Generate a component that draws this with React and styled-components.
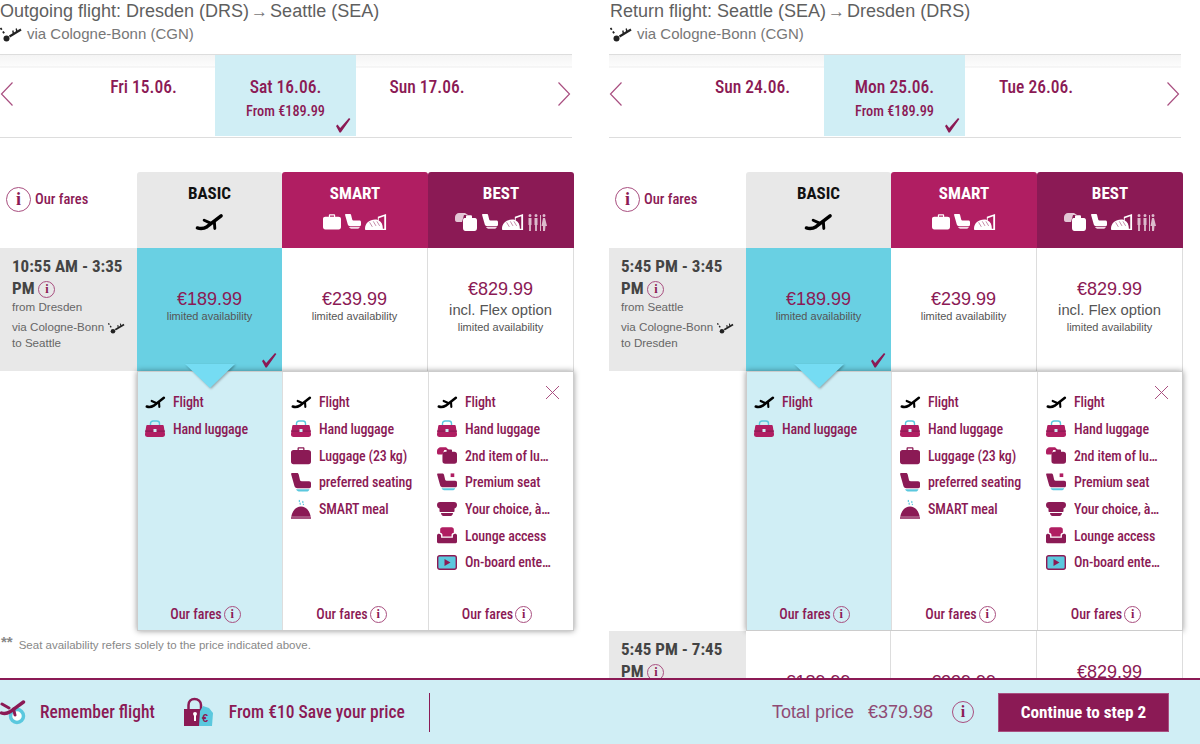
import React from 'react';
import styled, { createGlobalStyle, css } from 'styled-components';

const PLUM = '#8b1a55';
const narrow = css`
  font-family: Roboto, "Liberation Sans", sans-serif;
  font-stretch: 75%;
`;

const GlobalStyle = createGlobalStyle`
  html, body { margin: 0; padding: 0; background: #fff; }
  body { font-family: "Liberation Sans", Arial, sans-serif; color: #555; }
  * { box-sizing: border-box; }
`;

const Plane = ({ size = 21, color = '#000' }) => (
  <svg width={size} height={size * 0.7} viewBox="0 0 30 21">
    <g fill="none" stroke={color} strokeLinecap="round">
      <path strokeWidth="3.600" d="M2.500 16.500c3.500 1.200 7 .6 10-1.300L27 4" />
      <path strokeWidth="3" d="M9.500 8.500l6.500 3M20 10l.5 7" />
    </g>
  </svg>
);

const Stopover = () => (
  <svg width="22" height="17" viewBox="0 0 22 17">
    <circle cx="6.500" cy="13.500" r="3" fill="#222" />
    <g fill="none" stroke="#222">
      <path strokeWidth="1.800" strokeDasharray="2.200 2" d="M.5 3l4.500 6.500" />
      <path strokeWidth="2.200" d="M9.500 11.500L21 4.500" />
      <path strokeWidth="1.400" d="M13.500 9l-.7-3.500M17 7l-.8-3.500" />
    </g>
  </svg>
);

const Suitcase = ({ color = PLUM, width = 20 }) => (
  <svg width={width} height={width * 0.9} viewBox="0 0 20 18">
    <path fill={color} d="M6.500 3V1.500C6.500.7 7 .3 7.800.3h4.400c.8 0 1.300.4 1.300 1.200V3h3.500C19 3 20 4 20 5.500v9c0 1.700-1 2.700-2.500 2.700h-15C1 17.200 0 16.200 0 14.500v-9C0 4 1 3 2.500 3zm1.300 0h4.400V1.600H7.800z" />
  </svg>
);

const DoubleCase = () => (
  <svg width="23" height="18" viewBox="0 0 23 18">
    <path fill="#e3c6d5" d="M4 0h6l3 2H9L7 9H2C.5 9 0 8 0 6.500V4c0-2 2-4 4-4z" />
    <path fill="#fff" d="M9.500 5H11V3.500c0-.8.500-1.200 1.200-1.200h3.600c.7 0 1.200.4 1.200 1.200V5h3c1.300 0 2 1 2 2.500V15c0 2-1 3-2.500 3h-9C9 18 8 17 8 15V7.500C8 6 8.500 5 9.500 5z" />
  </svg>
);

const HandBag = () => (
  <svg width="20" height="18" viewBox="0 0 20 18">
    <path fill="none" stroke="#5bc8de" strokeWidth="1.400" d="M5.500 6V3.500C5.500 1.800 7 1 8 1h4c1 0 2.500.8 2.500 2.500V6" />
    <path fill="#b01e62" d="M2.500 5h15c.8 0 1.200.5 1.300 1.200L20 14c.2 2-1 3-2.500 3h-15C1 17 -.2 16 0 14l1.200-7.800C1.300 5.500 1.700 5 2.500 5z" />
    <rect x="0" y="10.500" width="20" height="1.200" fill="#8b1a55" />
    <rect x="8.500" y="9" width="3" height="3" fill="#d0eef5" />
  </svg>
);

const Seat = ({ color = PLUM, base = '#5bc8de', width = 20 }) => (
  <svg width={width} height={width * 0.95} viewBox="0 0 20 19">
    <path fill={color} d="M1 0h5c1 0 1.500.6 1.700 1.500L9 7c.2.800.8 1.200 1.600 1.200H18c1.300 0 2 .8 2 2v3.300c0 1-.7 1.700-1.700 1.700H6.500c-1.500 0-2.500-.7-3-2L.2 1.500C0 .6.300 0 1 0z" />
    <path fill={base} d="M5 16.200h13.500c-.5 1.500-1.500 2.300-3 2.300H9c-2 0-3.300-.8-4-2.300z" />
  </svg>
);

const MealBread = ({ width = 22 }) => (
  <svg width={width} height={width * 0.75} viewBox="0 0 24 18">
    <path fill="#fff" d="M14 3l9-3v18H2C.5 18 0 17 0 16c0-6 5-10 11-10 1 0 2 .2 3 .5zM15 7c3 1.500 4.500 4.500 4.500 9H21V2.500l-6 2z" />
    <path fill="none" stroke="rgba(139,26,85,.55)" strokeWidth="1" d="M5 9l3 5M9 8l3 5M13 8l3 5" />
  </svg>
);

const Cutlery = () => (
  <svg width="20" height="17" viewBox="0 0 20 17" opacity="0.7">
    <path fill="#fff" d="M2 0a1.500 1.500 0 110 3 1.500 1.500 0 010-3zM.5 4h3v7h-.6v6H1.100v-6H.5zM8 0a1.500 1.500 0 110 3 1.500 1.500 0 010-3zM6.500 4h3v7h-.6v6H7.100v-6h-.6zM12 1h1v16h-1zM16 0a1.500 1.500 0 110 3 1.500 1.500 0 010-3zM15 4h2l2 8h-1.500l-.5 5h-2v-5h-1.500z" />
  </svg>
);

const MealDome = () => (
  <svg width="20" height="20" viewBox="0 0 20 20">
    <path fill="none" stroke="#5bc8de" strokeWidth="1.200" strokeDasharray="2 1" d="M8.500 1c-1 2 1.500 3 .5 5M12 2c-1 1.500 1 2.500.3 4" />
    <path fill={PLUM} d="M10 7.500c5 0 8.500 4 9.800 10.300H.2C1.500 11.500 5 7.500 10 7.500zM0 18.300h20v1.500H0z" />
  </svg>
);

const SecondBag = () => (
  <svg width="20" height="17" viewBox="0 0 22 18">
    <path fill="#b01e62" d="M4 0h6l3 3H8L6 8H2C.5 8 0 7 0 6V4c0-2 2-4 4-4z" />
    <path fill={PLUM} d="M9 5h1.500V3.500c0-.8.500-1.200 1.200-1.200h3.600c.7 0 1.200.4 1.200 1.200V5H19c2 0 3 1.200 3 3v7c0 2-1 3-3 3H9c-2 0-3-1-3-3V8c0-1.800 1-3 3-3z" />
  </svg>
);

const PremiumSeat = () => (
  <svg width="20" height="19" viewBox="0 0 22 20">
    <rect x="15" y="0" width="4" height="4" fill="#b01e62" />
    <path fill={PLUM} d="M1 0h5c1 0 1.500.6 1.700 1.500L9 7c.2.800.8 1.200 1.600 1.200H20c1.300 0 2 .8 2 2v3.300c0 1-.7 1.700-1.700 1.700H6.500c-1.500 0-2.500-.7-3-2L.2 1.500C0 .6.300 0 1 0z" />
    <path fill="#5bc8de" d="M5 16.200h15c-.5 1.500-1.500 2.300-3 2.300H9c-2 0-3.300-.8-4-2.300z" />
  </svg>
);

const ChefHat = () => (
  <svg width="20" height="14" viewBox="0 0 20 14">
    <path fill={PLUM} d="M3 0h14c2 0 3 1.300 3 3s-1 3-2.500 3.500V9c0 .6-.4 1-1 1h-13c-.6 0-1-.4-1-1V6.500C1 6 0 4.700 0 3s1-3 3-3zM4 11h12c0 1.500-1 3-2.500 3h-7C5 14 4 12.500 4 11z" />
  </svg>
);

const Armchair = () => (
  <svg width="20" height="17" viewBox="0 0 22 18">
    <path fill="#b01e62" d="M6 0h10c1.500 0 2.500 1 2.500 2.500V6c-1.500 0-2.500 1-2.500 2.500V10H6V8.500C6 7 5 6 3.500 6V2.500C3.500 1 4.500 0 6 0z" />
    <path fill={PLUM} d="M0 9c0-1.300 1-2 2.200-2S4.500 8 4.500 9v2.500h13V9c0-1 1-2 2.300-2S22 7.700 22 9v7c0 1-.5 1.500-1.500 1.500h-19C.5 17.500 0 17 0 16z" />
  </svg>
);

const Screen = () => (
  <svg width="20" height="15" viewBox="0 0 20 15">
    <rect x="0.700" y="0.700" width="18.600" height="13.600" rx="2" fill="#5bc8de" stroke={PLUM} strokeWidth="1.400" />
    <path fill={PLUM} d="M7.500 4l6 3.500-6 3.500z" />
  </svg>
);

const Check = ({ size = 16 }) => (
  <svg width={size} height={size} viewBox="0 0 16 16">
    <path fill={PLUM} d="M1 9l1.600-1.400 2.600 3.400L14 1l1.400.9L5.800 15.500h-1.300z" />
  </svg>
);

const Chevron = ({ flip }) => (
  <svg width="14" height="26" viewBox="0 0 14 26">
    <path fill="none" stroke="#a94f80" strokeWidth="1.200" d={flip ? 'M1.500 1.500L12.500 13 1.500 24.500' : 'M12.500 1.500L1.500 13 12.500 24.500'} />
  </svg>
);

const Close = () => (
  <svg width="15" height="15" viewBox="0 0 15 15">
    <path fill="none" stroke="#a94f80" strokeWidth="1" d="M1 1l13 13M14 1L1 14" />
  </svg>
);

const Remember = () => (
  <svg width="26" height="26" viewBox="0 0 26 26">
    <circle cx="17" cy="17" r="6.500" fill="#fff" stroke="#5bc8de" strokeWidth="3.500" />
    <g fill="none" stroke={PLUM} strokeLinecap="round">
      <path strokeWidth="3.400" d="M1.500 14c3 1 6 .4 8.500-1.200L23.500 3" />
      <path strokeWidth="3" d="M2 5l7 4M13.500 10l1.500 6" />
    </g>
  </svg>
);

const PriceLock = () => (
  <svg width="30" height="30" viewBox="0 0 30 30">
    <path fill="none" stroke={PLUM} strokeWidth="2.500" d="M4.500 13V8c0-3.500 2.500-6 6-6s6.500 2.500 6.500 6v5" />
    <path fill={PLUM} d="M0 12h20v17H0z" />
    <path fill="#fff" d="M9 17a2 2 0 114 0l-1 2v5h-2v-5z" />
    <path fill="#5bc8de" d="M19 9l6 2 4 5-1 13H15l1-15z" />
    <text x="18" y="25" fontSize="11" fontWeight="700" fill={PLUM} fontFamily="Liberation Sans, sans-serif">€</text>
  </svg>
);

const InfoRing = styled.span`
  display: inline-flex;
  align-items: center;
  justify-content: center;
  width: ${(p) => p.$size || 17}px;
  height: ${(p) => p.$size || 17}px;
  border: ${(p) => (p.$size > 20 ? 1.5 : 1)}px solid #a94f80;
  border-radius: 50%;
  color: ${PLUM};
  font-family: "Liberation Serif", serif;
  font-stretch: normal;
  font-weight: 700;
  font-size: ${(p) => (p.$size || 17) * 0.72}px;
  line-height: 1;
  letter-spacing: 0;
  flex: none;
  vertical-align: middle;
`;

const Page = styled.div`
  position: relative;
  width: 1200px;
  height: 744px;
  overflow: hidden;
  display: grid;
  grid-template-columns: 574px 574px;
  column-gap: 35px;
  align-items: start;
`;

const Column = styled.section`
  min-width: 0;
`;

const Title = styled.h2`
  margin: 0;
  height: 22px;
  padding-left: ${(p) => (p.$inset ? 1 : 0)}px;
  font-size: 18px;
  line-height: 22px;
  font-weight: 400;
  color: #5f5f5f;
  white-space: nowrap;
`;

const TitleArrow = styled.span`
  margin: 0 2px;
  color: #777;
  font-size: 17px;
`;

const Via = styled.div`
  display: flex;
  align-items: center;
  gap: 5px;
  height: 22px;
  margin-bottom: 10px;
  padding-left: ${(p) => (p.$inset ? 1 : 0)}px;
  font-size: 15px;
  color: #777;
`;

const DateStrip = styled.div`
  display: grid;
  grid-template-columns: 72px 143px 141px 142px 1fr;
  height: 84px;
  margin-right: 2px;
  border-top: 1px solid #ddd;
  border-bottom: 1px solid #ddd;
  background: linear-gradient(#f4f4f4, #fcfcfc 11px, #eee 12px, #fff 13px);
`;

const ArrowCell = styled.div`
  display: flex;
  align-items: flex-start;
  justify-content: ${(p) => (p.$end ? 'flex-end' : 'flex-start')};
  margin-top: 13px;
  padding: 13px ${(p) => (p.$end ? '1px' : '0')} 0 0;
  background: #fff;
`;

const DateCell = styled.div`
  position: relative;
  margin-bottom: ${(p) => (p.$active ? '1px' : '0')};
  padding-top: ${(p) => (p.$active ? '22px' : '9px')};
  margin-top: ${(p) => (p.$active ? '0' : '13px')};
  text-align: center;
  background: ${(p) => (p.$active ? '#d0eef5' : '#fff')};
  color: ${PLUM};
  ${narrow}
`;

const DateLabel = styled.div`
  font-size: 17.500px;
  font-weight: 500;
  line-height: 20px;
`;

const DateFrom = styled.div`
  margin-top: 4px;
  font-size: 14.300px;
  font-weight: 500;
  line-height: 20px;
`;

const Corner = styled.span`
  position: absolute;
  right: 5px;
  bottom: 3px;
  line-height: 0;
`;

const FareGrid = styled.div`
  display: grid;
  grid-template-columns: 137px 145px 146px 146px;
  margin-top: 34px;
`;

const FareIntro = styled.div`
  display: flex;
  align-items: center;
  gap: 4px;
  height: 76px;
  padding: 0 0 22px 6px;
  color: ${PLUM};
  font-size: 14.500px;
  font-weight: 500;
  ${narrow}
`;

const FareHead = styled.div`
  display: flex;
  flex-direction: column;
  align-items: center;
  gap: 9px;
  height: 76px;
  padding-top: 11px;
  border-radius: 3px 3px 0 0;
  background: ${(p) => p.$bg};
  color: ${(p) => p.$fg};
  font-size: 17px;
  font-weight: 700;
  line-height: 20px;
  ${narrow}
`;

const HeadIcons = styled.div`
  display: flex;
  align-items: center;
  gap: 4px;
  height: 20px;
`;

const TimeCell = styled.div`
  height: 123px;
  padding: 7px 12px;
  background: #e8e8e8;
`;

const TimeText = styled.div`
  color: #444;
  font-size: 17px;
  font-weight: 700;
  line-height: 22px;
  ${narrow}
`;

const RouteLine = styled.div`
  display: flex;
  align-items: center;
  gap: 4px;
  height: 16px;
  margin-top: ${(p) => p.$gap || 0}px;
  color: #666;
  font-size: 11.600px;
  line-height: 16px;
  white-space: nowrap;
`;

const PriceCell = styled.div`
  position: relative;
  display: flex;
  flex-direction: column;
  align-items: center;
  justify-content: center;
  height: 123px;
  padding-bottom: 8px;
  background: ${(p) => (p.$active ? '#69d0e3' : '#fff')};
  border-right: ${(p) => (p.$active ? 'none' : '1px solid #ddd')};
`;

const Price = styled.div`
  color: ${PLUM};
  font-size: 18px;
  line-height: 21px;
`;

const FlexNote = styled.div`
  color: #555;
  font-size: 14.800px;
  line-height: 21px;
`;

const Limited = styled.div`
  color: #555;
  font-size: 11px;
  line-height: 12px;
`;

const Panel = styled.div`
  position: relative;
  grid-column: 2 / 5;
  display: grid;
  grid-template-columns: 145px 146px 1fr;
  height: 260px;
  background: #fff;
  border: 1px solid #ccc;
  box-shadow: 0 0 6px rgba(0, 0, 0, 0.4);
`;

const Pointer = styled.div`
  position: absolute;
  left: 47px;
  top: -8px;
  width: 0;
  height: 0;
  border-left: 25px solid transparent;
  border-right: 25px solid transparent;
  border-top: 24px solid #75dcf3;
  filter: drop-shadow(1px 1px 1px rgba(0, 0, 0, 0.3));
`;

const CloseButton = styled.span`
  position: absolute;
  right: 13px;
  top: 13px;
  line-height: 0;
`;

const PanelCol = styled.div`
  display: flex;
  flex-direction: column;
  min-width: 0;
  padding: 17px 0 6px ${(p) => (p.$active ? 7 : 8)}px;
  background: ${(p) => (p.$active ? '#d0eef5' : '#fff')};
  border-right: ${(p) => (p.$last ? 'none' : '1px solid #ddd')};
`;

const Feature = styled.div`
  display: grid;
  grid-template-columns: 28px 1fr;
  align-items: center;
  height: 26.700px;
  color: ${PLUM};
  font-size: 14px;
  font-weight: 500;
  letter-spacing: -0.15px;
  ${narrow}
`;

const FeatureIcon = styled.span`
  display: flex;
  align-items: center;
`;

const FeatureText = styled.span`
  display: block;
  max-width: ${(p) => (p.$tight ? 88 : 110)}px;
  overflow: hidden;
  white-space: nowrap;
  text-overflow: ellipsis;
`;

const PanelFoot = styled.div`
  display: flex;
  align-items: center;
  justify-content: center;
  gap: 2px;
  height: 20px;
  margin-top: auto;
  padding-right: 16px;
  color: ${PLUM};
  font-size: 14px;
  font-weight: 500;
  ${narrow}
`;

const Footnote = styled.div`
  display: flex;
  gap: 6px;
  height: 20px;
  margin-top: 4px;
  padding-left: 1px;
  color: #888;
  font-size: 11.500px;
  line-height: 20px;
`;

const FootnoteMark = styled.strong`
  font-size: 15px;
  line-height: 14px;
`;

const BottomBar = styled.footer`
  position: absolute;
  left: 0;
  right: 0;
  bottom: 0;
  display: flex;
  align-items: center;
  height: 66px;
  padding-right: 31px;
  background: #d0eef5;
  border-top: 2px solid ${PLUM};
  color: ${PLUM};
  ${narrow}
`;

const BarAction = styled.div`
  display: flex;
  align-items: center;
  gap: ${(p) => p.$gap}px;
  margin-right: ${(p) => p.$space}px;
  font-size: 17.500px;
  font-weight: 500;
`;

const BarDivider = styled.div`
  width: 1px;
  height: 39px;
  background: ${PLUM};
`;

const Total = styled.div`
  display: flex;
  align-items: center;
  margin-left: auto;
  color: #8f4a74;
  font-family: "Liberation Sans", sans-serif;
  font-stretch: normal;
  font-size: 18px;
`;

const TotalPrice = styled.span`
  margin: 0 19px 0 14px;
`;

const ContinueButton = styled.button`
  width: 171px;
  height: 39px;
  margin-left: 24px;
  border: 1px solid #a94f80;
  background: ${PLUM};
  color: #fff;
  font-size: 17.200px;
  font-weight: 700;
  ${narrow}
`;

const BASIC_FEATURES = [
  [<Plane key="p" />, 'Flight'],
  [<HandBag key="h" />, 'Hand luggage'],
];

const SMART_FEATURES = [
  ...BASIC_FEATURES,
  [<Suitcase key="s" />, 'Luggage (23 kg)'],
  [<Seat key="t" />, 'preferred seating'],
  [<MealDome key="m" />, 'SMART meal'],
];

const BEST_FEATURES = [
  ...BASIC_FEATURES,
  [<SecondBag key="b" />, '2nd item of luggage'],
  [<PremiumSeat key="t" />, 'Premium seat'],
  [<ChefHat key="c" />, 'Your choice, à la carte'],
  [<Armchair key="a" />, 'Lounge access'],
  [<Screen key="e" />, 'On-board entertainment'],
];

const FareHeaders = () => (
  <>
    <FareIntro>
      <InfoRing $size={25}>i</InfoRing>
      Our fares
    </FareIntro>
    <FareHead $bg="#e8e8e8" $fg="#111">
      BASIC
      <HeadIcons>
        <Plane size={29} />
      </HeadIcons>
    </FareHead>
    <FareHead $bg="#b01e62" $fg="#fff">
      SMART
      <HeadIcons>
        <Suitcase color="#fff" width={18} />
        <Seat color="#fff" base="#f3d8e6" width={16} />
        <MealBread />
      </HeadIcons>
    </FareHead>
    <FareHead $bg={PLUM} $fg="#fff">
      BEST
      <HeadIcons>
        <DoubleCase />
        <Seat color="#fff" base="#f3d8e6" width={16} />
        <MealBread />
        <Cutlery />
      </HeadIcons>
    </FareHead>
  </>
);

const FareRow = ({ time, from, via, to, selected }) => (
  <>
    <TimeCell>
      <TimeText>
        {time} <InfoRing>i</InfoRing>
      </TimeText>
      <RouteLine>from {from}</RouteLine>
      <RouteLine $gap={4}>
        via {via} <Stopover />
      </RouteLine>
      <RouteLine>to {to}</RouteLine>
    </TimeCell>
    <PriceCell $active={selected}>
      <Price>€189.99</Price>
      <Limited>limited availability</Limited>
      {selected && (
        <Corner>
          <Check />
        </Corner>
      )}
    </PriceCell>
    <PriceCell>
      <Price>€239.99</Price>
      <Limited>limited availability</Limited>
    </PriceCell>
    <PriceCell>
      <Price>€829.99</Price>
      <FlexNote>incl. Flex option</FlexNote>
      <Limited>limited availability</Limited>
    </PriceCell>
  </>
);

const FeatureColumn = ({ items, active, last }) => (
  <PanelCol $active={active} $last={last}>
    {items.map(([icon, label]) => (
      <Feature key={label}>
        <FeatureIcon>{icon}</FeatureIcon>
        <FeatureText $tight={last}>{label}</FeatureText>
      </Feature>
    ))}
    <PanelFoot>
      Our fares <InfoRing>i</InfoRing>
    </PanelFoot>
  </PanelCol>
);

const FLIGHTS = [
  {
    label: 'Outgoing flight: Dresden (DRS)',
    dest: 'Seattle (SEA)',
    dates: ['Fri 15.06.', 'Sat 16.06.', 'Sun 17.06.'],
    time: '10:55 AM - 3:35 PM',
    from: 'Dresden',
    to: 'Seattle',
  },
  {
    label: 'Return flight: Seattle (SEA)',
    dest: 'Dresden (DRS)',
    dates: ['Sun 24.06.', 'Mon 25.06.', 'Tue 26.06.'],
    time: '5:45 PM - 3:45 PM',
    from: 'Seattle',
    to: 'Dresden',
    next: { time: '5:45 PM - 7:45 PM', from: 'Seattle', to: 'Dresden' },
  },
];

const FlightColumn = ({ flight, inset }) => (
  <Column>
    <Title $inset={inset}>
      {flight.label}
      <TitleArrow>→</TitleArrow>
      {flight.dest}
    </Title>
    <Via $inset={inset}>
      <Stopover /> via Cologne-Bonn (CGN)
    </Via>
    <DateStrip>
      <ArrowCell>
        <Chevron />
      </ArrowCell>
      {flight.dates.map((date, i) => (
        <DateCell key={date} $active={i === 1}>
          <DateLabel>{date}</DateLabel>
          {i === 1 && <DateFrom>From €189.99</DateFrom>}
          {i === 1 && (
            <Corner>
              <Check />
            </Corner>
          )}
        </DateCell>
      ))}
      <ArrowCell $end>
        <Chevron flip />
      </ArrowCell>
    </DateStrip>
    <FareGrid>
      <FareHeaders />
      <FareRow
        time={flight.time}
        from={flight.from}
        via="Cologne-Bonn"
        to={flight.to}
        selected
      />
      <div />
      <Panel>
        <FeatureColumn items={BASIC_FEATURES} active />
        <FeatureColumn items={SMART_FEATURES} />
        <FeatureColumn items={BEST_FEATURES} last />
        <Pointer />
        <CloseButton>
          <Close />
        </CloseButton>
      </Panel>
      {flight.next && (
        <FareRow
          time={flight.next.time}
          from={flight.next.from}
          via="Cologne-Bonn"
          to={flight.next.to}
        />
      )}
    </FareGrid>
    {!flight.next && (
      <Footnote>
        <FootnoteMark>**</FootnoteMark> Seat availability refers solely to the price indicated above.
      </Footnote>
    )}
  </Column>
);

export default function App() {
  return (
    <Page>
      <GlobalStyle />
      {FLIGHTS.map((flight, i) => (
        <FlightColumn key={flight.label} flight={flight} inset={i === 1} />
      ))}
      <BottomBar>
        <BarAction $gap={14} $space={29}>
          <Remember />
          Remember flight
        </BarAction>
        <BarAction $gap={15} $space={24}>
          <PriceLock />
          From €10 Save your price
        </BarAction>
        <BarDivider />
        <Total>
          Total price
          <TotalPrice>€379.98</TotalPrice>
          <InfoRing $size={22}>i</InfoRing>
        </Total>
        <ContinueButton>Continue to step 2</ContinueButton>
      </BottomBar>
    </Page>
  );
}
